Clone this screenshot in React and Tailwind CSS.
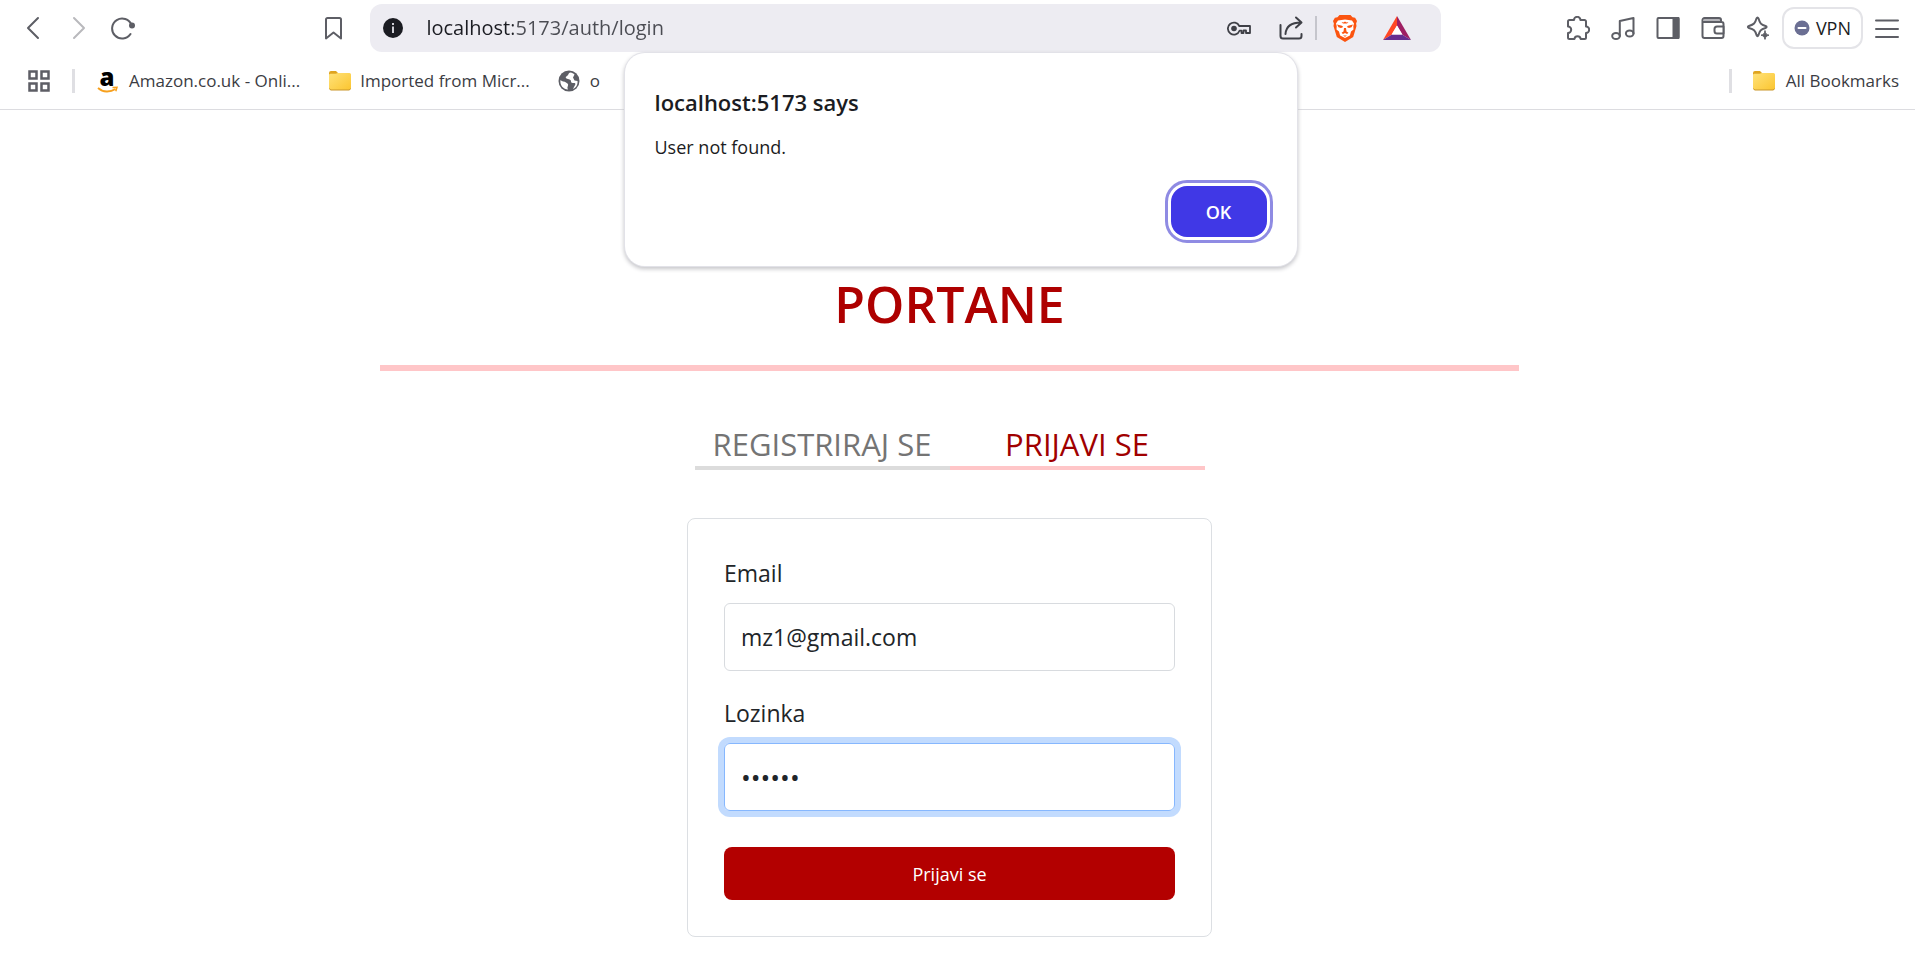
const stroke = { fill: 'none', stroke: 'currentColor', strokeWidth: 2, strokeLinecap: 'round', strokeLinejoin: 'round' }

function Folder() {
  return (
    <svg width="24" height="22" viewBox="0 0 24 22" aria-hidden="true">
      <defs>
        <linearGradient id="folderFill" x1="0" y1="0" x2="1" y2="1">
          <stop offset="0" stopColor="#ffe27a" />
          <stop offset="1" stopColor="#fbc52f" />
        </linearGradient>
      </defs>
      <path d="M1 5V3a2 2 0 0 1 2-2h5l3 3z" fill="#dfa420" />
      <path d="M1 5a1.500 1.500 0 0 1 1.500-1.300H7.500L10 3h11.500A1.500 1.500 0 0 1 23 4.500V18a2 2 0 0 1-2 2H3a2 2 0 0 1-2-2z" fill="url(#folderFill)" />
      <path d="M1.500 18.500A2 2 0 0 0 3 20h18a2 2 0 0 0 1.500-1.500" fill="none" stroke="#c9962a" strokeWidth="1" />
    </svg>
  )
}

function IconButton({ label, className = '', children }) {
  return (
    <button type="button" aria-label={label} className={`flex size-6 shrink-0 items-center justify-center ${className}`}>
      {children}
    </button>
  )
}

function AddressBar() {
  return (
    <div className="flex h-12 w-[57%] items-center rounded-xl bg-[#edecf2] pr-8 pl-3">
      <svg width="22" height="22" viewBox="0 0 22 22" aria-hidden="true">
        <circle cx="11" cy="11" r="10" fill="#1b1c22" />
        <rect x="10" y="9.500" width="2" height="6.500" fill="#cfcfd6" />
        <rect x="10" y="6" width="2" height="2" fill="#cfcfd6" />
      </svg>
      <input
        type="text"
        aria-label="Address"
        readOnly
        value="localhost:5173/auth/login"
        className="ml-[22px] min-w-0 flex-1 bg-[linear-gradient(90deg,#1b1c22_87px,#4b4c53_87px)] bg-clip-text text-xl text-transparent outline-none"
      />
      <div className="flex items-center text-[#3f4047]">
        <IconButton label="Passwords">
          <svg width="24" height="24" viewBox="0 0 24 24" {...stroke}>
            <path d="M12.300 10H23v7h-4v-2.500h-2.500V17h-2v-2.300h-2A6 6 0 1 1 12.300 10z" strokeWidth="1.800" />
            <circle cx="7" cy="12.500" r="2.800" fill="currentColor" stroke="none" />
          </svg>
        </IconButton>
        <IconButton label="Share" className="ml-7">
          <svg width="24" height="24" viewBox="0 0 24 24" {...stroke}>
            <path d="M1.500 9v11a2.500 2.500 0 0 0 2.500 2.500h16a2.500 2.500 0 0 0 2.500-2.500v-2" />
            <path d="M6.500 18C7 11 11 6.500 22 6.500M17 1.500l5.500 5-5.500 5" />
          </svg>
        </IconButton>
        <span className="mr-4 ml-3 h-6 w-0.5 bg-[#c5c5cc]" />
        <IconButton label="Shields">
          <svg width="24" height="28" viewBox="0 0 24 28" className="shrink-0">
            <path d="M6.500 1h11l2 2.200 2.600.6L24 7l-.9 2.500L23.500 12l-3.300 11L12 28 3.800 23 .5 12l.4-2.500L0 7l1.900-3.200 2.600-.6z" fill="#fb5410" />
            <path d="M5 6.500l7-1 7 1 2 3-.7 2.500.2 3.500-2.500 2-1.100 4L12 24l-4.900-2.500-1.100-4-2.500-2 .2-3.500L3 9.500z" fill="#fff" />
            <path d="M4 10.500l5 1.200 1.200 1.300-2.200 1-2.500-.8zM20 10.500l-5 1.200-1.200 1.300 2.200 1 2.500-.8zM8.500 8l2 .500L12 7.500l1.500 1 2-.5-1.500 1.500h-4zM11 14h2l.5 3.500 2 1.200-1.500 1.300-2-1-2 1-1.500-1.300 2-1.200zM10 21.500h4l-2 1.200z" fill="#fb5410" />
          </svg>
        </IconButton>
        <IconButton label="Rewards" className="ml-7">
          <svg width="28" height="24" viewBox="0 0 28 24" className="shrink-0">
            <path d="M14 0L0 24l9-5.500 5-9z" fill="#ff4724" />
            <path d="M14 0v9.500l5 9 9 5.500z" fill="#9e1f63" />
            <path d="M0 24h28l-9-5.500H9z" fill="#662d91" />
            <path d="M14 9.500l-5.500 9h11z" fill="#fff" />
          </svg>
        </IconButton>
      </div>
    </div>
  )
}

function Toolbar() {
  return (
    <div className="flex items-center pt-1 pr-4 pl-[21px] text-[#5d5e65]">
      <nav aria-label="History" className="flex items-center gap-[21px]">
        <IconButton label="Back">
          <svg width="24" height="24" viewBox="0 0 24 24" {...stroke}><path d="M17 2L7 12l10 10" /></svg>
        </IconButton>
        <IconButton label="Forward" className="text-[#b9b9bd]">
          <svg width="24" height="24" viewBox="0 0 24 24" {...stroke}><path d="M8 2l10 10L8 22" /></svg>
        </IconButton>
        <IconButton label="Reload">
          <svg width="24" height="24" viewBox="0 0 24 24" {...stroke}>
            <path d="M20.500 9A10 10 0 1 0 19.500 18" />
            <circle cx="21" cy="9.500" r="3" fill="currentColor" stroke="none" />
          </svg>
        </IconButton>
      </nav>
      <span className="flex-3" />
      <IconButton label="Bookmark this page" className="mr-6">
        <svg width="24" height="24" viewBox="0 0 24 24" {...stroke}><path d="M4 3.500A1.500 1.500 0 0 1 5.500 2h12A1.500 1.500 0 0 1 19 3.500V22.500l-7.500-6-7.500 6z" /></svg>
      </IconButton>
      <AddressBar />
      <span className="flex-2" />
      <div className="flex items-center gap-[21px]">
        <IconButton label="Extensions">
          <svg width="24" height="24" viewBox="0 0 24 24" {...stroke}>
            <path d="M2 5.500A1.500 1.500 0 0 1 3.500 4H8a3.200 3.200 0 0 1 6.400 0h4A1.500 1.500 0 0 1 20 5.500v5a3.200 3.200 0 0 1 0 6.400v4.600a1.500 1.500 0 0 1-1.500 1.500h-3.800a3.200 3.200 0 0 0-6.300 0H3.500A1.500 1.500 0 0 1 2 21.500V17a3.200 3.200 0 0 0 0-6.400z" />
          </svg>
        </IconButton>
        <IconButton label="Media">
          <svg width="24" height="24" viewBox="0 0 24 24" {...stroke}>
            <ellipse cx="5" cy="20" rx="3.800" ry="3" /><ellipse cx="18.700" cy="17.500" rx="3.800" ry="3" />
            <path d="M8.800 20V5L22.500 2v15.500" />
          </svg>
        </IconButton>
        <IconButton label="Side panel">
          <svg width="24" height="24" viewBox="0 0 24 24" {...stroke}>
            <rect x="1.500" y="2" width="21" height="20" rx="1" /><path d="M17.500 2h5v20h-5z" fill="currentColor" />
          </svg>
        </IconButton>
        <IconButton label="Wallet">
          <svg width="24" height="24" viewBox="0 0 24 24" {...stroke}>
            <path d="M3 3h16v3H3z" fill="#b5b5ba" stroke="none" />
            <path d="M1.500 6V20A2 2 0 0 0 3.500 22h17a2 2 0 0 0 2-2V8a2 2 0 0 0-2-2zM1.500 6V4a2 2 0 0 1 2-2H18a2 2 0 0 1 2 2v2" />
            <path d="M22.500 10.500H16a2.500 2.500 0 0 0-2.500 2.500v2a2.500 2.500 0 0 0 2.500 2.500h6.500z" fill="#fff" />
          </svg>
        </IconButton>
        <IconButton label="Assistant">
          <svg width="24" height="24" viewBox="0 0 24 24" {...stroke}>
            <path d="M10.500 2.500c.7-1.500 1.300-1.500 2 0 1.500 5 2.500 6 7 7.500 1.500.7 1.500 1.300 0 2-5 1.500-5.500 2.500-7 7-.7 1.500-1.300 1.500-2 0-1.500-5-2.500-5.500-7.500-7-1.500-.700-1.500-1.300 0-2C8 8.500 9 7.500 10.500 2.500z" />
            <path d="M19 15c.8 3 1.200 3.400 4 4.200-2.800.8-3.200 1.200-4 4.200-.8-3-1.200-3.400-4-4.200 2.800-.8 3.200-1.200 4-4.200z" fill="currentColor" strokeWidth="1" />
          </svg>
        </IconButton>
      </div>
      <button type="button" className="ml-3 flex h-[42px] items-center gap-1.5 rounded-xl border-2 border-[#e4e4e8] px-2.5 text-lg text-[#1b1c22]">
        <svg width="16" height="16" viewBox="0 0 16 16" aria-hidden="true">
          <circle cx="8" cy="8" r="7.500" fill="#6b6f93" /><rect x="3.500" y="7" width="9" height="2" rx="1" fill="#fff" />
        </svg>
        VPN
      </button>
      <IconButton label="Menu" className="ml-3">
        <svg width="24" height="24" viewBox="0 0 24 24" {...stroke}><path d="M1 4.500h22M1 13h22M1 21h22" /></svg>
      </IconButton>
    </div>
  )
}

function BookmarksBar() {
  return (
    <nav aria-label="Bookmarks" className="flex h-[58px] items-center border-b border-[#dcdce0] pr-4 pl-7 text-[17px] text-[#3b3c43]">
      <button type="button" aria-label="Apps" className="text-[#5d5e65]">
        <svg width="22" height="22" viewBox="0 0 22 22" fill="none" stroke="currentColor" strokeWidth="2.500">
          <path d="M1.500 1.500h7v7h-7zM13.500 1.500h7v7h-7zM1.500 13.500h7v7h-7zM13.500 13.500h7v7h-7z" />
        </svg>
      </button>
      <span className="ml-[22px] h-6 w-[3px] bg-[#dfdfe3]" />
      <a href="#amazon" className="ml-[22px] flex items-center gap-2.5">
        <svg width="22" height="28" viewBox="0 -4 22 28" aria-hidden="true" className="overflow-visible">
          <text x="10" y="15" textAnchor="middle" fontFamily="Open Sans" fontWeight="800" fontSize="24" fill="#000">a</text>
          <path d="M1 17c5 4.500 12 4.500 17.500 1" fill="none" stroke="#f7a01d" strokeWidth="1.800" />
          <path d="M15.500 16.500l4.500-.200-1.200 4" fill="none" stroke="#f7a01d" strokeWidth="1.500" />
        </svg>
        Amazon.co.uk - Onli...
      </a>
      <a href="#imported" className="ml-7 flex items-center gap-2"><Folder />Imported from Micr...</a>
      <a href="#o" className="ml-7 flex items-center gap-2.5">
        <svg width="22" height="22" viewBox="0 0 22 22" aria-hidden="true">
          <circle cx="11" cy="11" r="10.500" fill="#5d5e65" />
          <path d="M12.500 2.500C10 3 11 5 9 6s-1.500 2.500 1 3 3 1 3 2.500 1 1.500 3 1.500 1.500 2 .5 3l-1.500 3c3-1 5-4.500 4.500-8l-3-.5-1.500-3 1.500-3c-1-1-2.500-1.700-4-2zM2.500 10c1.500 2 4 1 5.500 2.500s2.500 1 2 3-1 2 0 4C5.500 19.500 1.500 15 2.500 10z" fill="#fff" />
        </svg>
        o
      </a>
      <span className="ml-auto h-6 w-[3px] bg-[#dfdfe3]" />
      <a href="#all" className="ml-5 flex items-center gap-2.5"><Folder />All Bookmarks</a>
    </nav>
  )
}

function AlertDialog() {
  return (
    <div className="absolute inset-x-0 top-[53px] flex justify-center pl-1.5">
      <div
        role="alertdialog"
        aria-labelledby="alert-title"
        aria-describedby="alert-text"
        className="flex w-[672px] flex-col rounded-[20px] bg-white px-[30px] pt-8 pb-[29px] text-[#1b1c22] shadow-[0_0_0_1px_#e2e2e8,0_2px_4px_1px_#c4c4c8]"
      >
        <h2 id="alert-title" className="text-[22px] leading-[34px] font-semibold">localhost:5173 says</h2>
        <p id="alert-text" className="mt-3.5 text-lg leading-7">User not found.</p>
        <button type="button" className="mt-[25px] flex h-[51px] w-24 items-center justify-center self-end rounded-2xl bg-[#4038e6] text-lg font-semibold text-white outline-3 outline-offset-3 outline-[#8f8be3]">
          OK
        </button>
      </div>
    </div>
  )
}

function Field({ id, label, className = '', ...input }) {
  return (
    <div className="flex flex-col gap-3">
      <label htmlFor={id} className="leading-9">{label}</label>
      <input id={id} className={`h-[68px] w-full rounded-md border px-4 outline-none ${className}`} {...input} />
    </div>
  )
}

function Login() {
  return (
    <main className="flex flex-col items-center pt-[158px] pr-4 text-[23px] text-[#212529]">
      <h1 className="text-[50px] leading-[72px] font-semibold text-[#ae0000]">PORTANE</h1>
      <hr className="mt-[25px] w-3/5 border-t-6 border-[#ffc6c8]" />
      <nav aria-label="Auth" className="mt-[52px] grid w-[510px] grid-cols-2 text-center text-[31px] leading-[43px]">
        <a href="#register" className="border-b-4 border-[#dcdcdc] text-[#747474]">REGISTRIRAJ SE</a>
        <a href="#login" aria-current="page" className="border-b-4 border-[#ffc6c8] text-[#a00000]">PRIJAVI SE</a>
      </nav>
      <form className="mt-12 mb-4 flex w-[525px] flex-col rounded-lg border border-[#dcdfe3] p-9" onSubmit={(e) => e.preventDefault()}>
        <div className="flex flex-col gap-6">
          <Field id="email" label="Email" type="email" defaultValue="mz1@gmail.com" className="border-[#d8dbdf]" />
          <Field id="password" label="Lozinka" type="password" defaultValue="lozink" className="border-[#86b7fe] text-[26px] ring-6 ring-[#c2dbfe]" />
        </div>
        <button type="submit" className="mt-9 h-[53px] rounded-lg bg-[#b30000] text-lg text-white">Prijavi se</button>
      </form>
    </main>
  )
}

export default function App() {
  return (
    <div className="relative min-h-screen bg-white font-['Open_Sans','Noto_Sans',sans-serif]">
      <header>
        <Toolbar />
        <BookmarksBar />
      </header>
      <Login />
      <AlertDialog />
    </div>
  )
}
